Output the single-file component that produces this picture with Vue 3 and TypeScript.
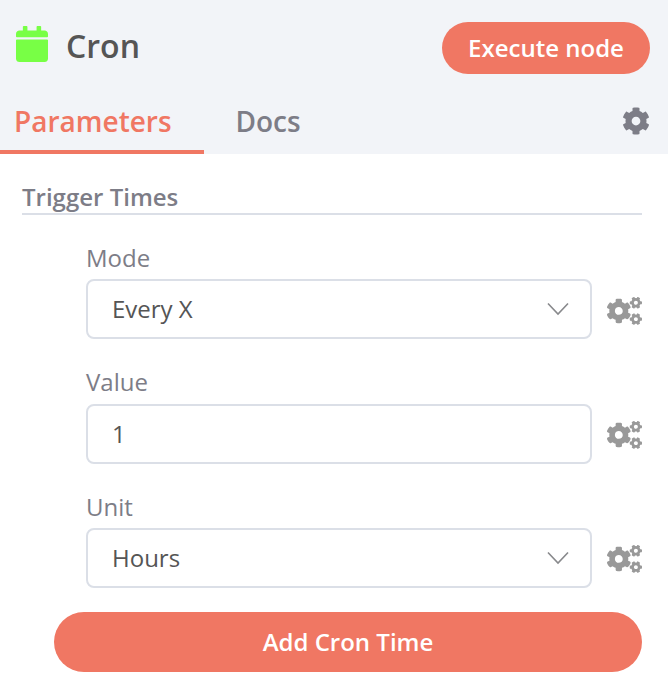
<script setup lang="ts">
import { ref } from 'vue'

interface Field {
  label: string
  value: string
  kind: 'select' | 'input'
}

const fields = ref<Field[]>([
  { label: 'Mode', value: 'Every X', kind: 'select' },
  { label: 'Value', value: '1', kind: 'input' },
  { label: 'Unit', value: 'Hours', kind: 'select' },
])
</script>

<template>
  <main class="panel">
    <header class="header">
      <div class="title-row">
        <svg class="calendar" viewBox="0 0 448 512" preserveAspectRatio="none" aria-hidden="true">
          <path d="M12 192h424c6.600 0 12 5.400 12 12v260c0 26.500-21.500 48-48 48H48c-26.500 0-48-21.500-48-48V204c0-6.600 5.400-12 12-12zm436-44v-36c0-26.500-21.500-48-48-48h-48V12c0-6.600-5.400-12-12-12h-40c-6.600 0-12 5.400-12 12v52H160V12c0-6.600-5.400-12-12-12h-40c-6.600 0-12 5.400-12 12v52H48C21.500 64 0 85.500 0 112v36c0 6.600 5.400 12 12 12h424c6.600 0 12-5.400 12-12z" />
        </svg>
        <h1 class="title">Cron</h1>
        <button class="button execute" type="button">Execute node</button>
      </div>
      <nav class="tabs">
        <a class="tab active">Parameters</a>
        <a class="tab docs">Docs</a>
        <svg class="settings" viewBox="0 0 512 512" aria-hidden="true">
          <path d="M487.400 315.700l-42.600-24.600c4.300-23.200 4.300-47 0-70.200l42.600-24.600c4.900-2.800 7.100-8.600 5.500-14-11.100-35.600-30-67.800-54.700-94.600-3.800-4.100-10-5.100-14.800-2.300L380.800 110c-17.900-15.400-38.500-27.300-60.800-35.100V25.800c0-5.600-3.900-10.500-9.400-11.700-36.700-8.200-74.300-7.800-109.200 0-5.500 1.200-9.400 6.100-9.400 11.700V75c-22.200 7.900-42.800 19.800-60.800 35.100L88.700 85.500c-4.900-2.800-11-1.900-14.800 2.300-24.700 26.700-43.600 58.900-54.700 94.600-1.700 5.400.6 11.200 5.500 14L67.300 221c-4.300 23.200-4.300 47 0 70.200l-42.600 24.600c-4.900 2.800-7.100 8.600-5.500 14 11.100 35.600 30 67.800 54.700 94.600 3.800 4.100 10 5.100 14.800 2.300l42.600-24.600c17.900 15.400 38.500 27.300 60.800 35.100v49.200c0 5.600 3.900 10.500 9.400 11.700 36.700 8.200 74.300 7.800 109.200 0 5.500-1.200 9.400-6.100 9.400-11.700v-49.200c22.200-7.900 42.800-19.800 60.800-35.100l42.600 24.600c4.900 2.800 11 1.900 14.800-2.300 24.700-26.700 43.600-58.900 54.700-94.600 1.500-5.500-.7-11.300-5.600-14.100zM256 336c-44.100 0-80-35.900-80-80s35.900-80 80-80 80 35.900 80 80-35.900 80-80 80z" />
        </svg>
      </nav>
    </header>

    <section class="content">
      <h2 class="section-title">Trigger Times</h2>
      <div class="fields">
        <div v-for="field in fields" :key="field.label" class="field">
          <span class="label">{{ field.label }}</span>
          <div class="row">
            <div class="control">
              <span class="value">{{ field.value }}</span>
              <svg v-if="field.kind === 'select'" class="chevron" viewBox="0 0 22 14" aria-hidden="true">
                <path d="M1 1.500L11 12L21 1.500" />
              </svg>
            </div>
            <svg class="cogs" viewBox="0 0 640 512" aria-hidden="true">
              <path d="M512.100 191l-8.200 14.300c-3 5.300-9.400 7.500-15.100 5.400-11.800-4.400-22.600-10.700-32.100-18.600-4.600-3.800-5.800-10.500-2.800-15.700l8.200-14.300c-6.900-8-12.300-17.300-15.900-27.400h-16.500c-6 0-11.200-4.300-12.200-10.300-2-12-2.100-24.600 0-37.100 1-6 6.200-10.400 12.200-10.400h16.500c3.600-10.100 9-19.400 15.900-27.400l-8.200-14.300c-3-5.200-1.900-11.900 2.800-15.700 9.500-7.900 20.400-14.200 32.100-18.600 5.700-2.100 12.100.1 15.100 5.400l8.200 14.300c10.500-1.900 21.200-1.900 31.700 0L552 6.300c3-5.300 9.400-7.500 15.100-5.400 11.800 4.400 22.600 10.700 32.100 18.600 4.600 3.800 5.800 10.500 2.800 15.700l-8.200 14.300c6.900 8 12.300 17.300 15.900 27.400h16.500c6 0 11.200 4.300 12.200 10.300 2 12 2.100 24.600 0 37.100-1 6-6.200 10.400-12.200 10.400h-16.500c-3.600 10.100-9 19.400-15.900 27.400l8.200 14.300c3 5.200 1.900 11.900-2.800 15.700-9.500 7.900-20.400 14.200-32.100 18.600-5.700 2.100-12.100-.1-15.100-5.400l-8.200-14.300c-10.400 1.900-21.200 1.900-31.700 0zm-10.500-58.800c38.500 29.600 82.400-14.300 52.800-52.800-38.500-29.700-82.400 14.300-52.800 52.800zM386.300 286.100l33.700 16.800c10.100 5.800 14.500 18.100 10.500 29.100-8.900 24.200-26.400 46.400-42.600 65.800-7.400 8.900-20.200 11.100-30.300 5.300l-29.100-16.800c-16 13.700-34.600 24.600-54.900 31.700v33.600c0 11.600-8.300 21.600-19.700 23.600-24.600 4.200-50.400 4.400-75.900 0-11.500-2-20-11.900-20-23.600V418c-20.300-7.200-38.900-18-54.900-31.700L74 403c-10 5.800-22.900 3.600-30.300-5.300-16.200-19.400-33.300-41.600-42.200-65.700-4-10.900.4-23.200 10.500-29.100l33.300-16.800c-3.900-20.900-3.900-42.400 0-63.400L12 205.800c-10.100-5.800-14.600-18.100-10.500-29 8.900-24.200 26-46.400 42.200-65.800 7.400-8.900 20.200-11.100 30.300-5.300l29.100 16.800c16-13.700 34.600-24.600 54.900-31.700V57.100c0-11.500 8.200-21.500 19.600-23.500 24.600-4.200 50.500-4.400 76-.1 11.500 2 20 11.900 20 23.600v33.600c20.300 7.200 38.900 18 54.900 31.700l29.100-16.800c10-5.800 22.900-3.600 30.300 5.300 16.200 19.400 33.200 41.600 42.100 65.800 4 10.900.1 23.200-10 29.100l-33.700 16.800c3.900 21 3.900 42.500 0 63.500zm-117.600 21.100c59.200-77-28.700-164.900-105.700-105.700-59.200 77 28.700 164.900 105.700 105.700zm243.400 182.700l-8.200 14.300c-3 5.300-9.400 7.500-15.100 5.400-11.800-4.400-22.600-10.700-32.100-18.600-4.600-3.800-5.800-10.500-2.800-15.700l8.200-14.300c-6.900-8-12.300-17.300-15.900-27.400h-16.500c-6 0-11.200-4.300-12.200-10.300-2-12-2.100-24.600 0-37.100 1-6 6.200-10.400 12.200-10.400h16.500c3.600-10.100 9-19.400 15.900-27.400l-8.200-14.300c-3-5.200-1.900-11.900 2.800-15.700 9.500-7.900 20.400-14.200 32.100-18.600 5.700-2.100 12.100.1 15.100 5.400l8.200 14.300c10.500-1.900 21.200-1.900 31.700 0l8.200-14.300c3-5.300 9.400-7.500 15.100-5.400 11.800 4.400 22.600 10.700 32.100 18.600 4.600 3.800 5.800 10.500 2.800 15.700l-8.200 14.300c6.900 8 12.300 17.300 15.900 27.400h16.500c6 0 11.200 4.300 12.200 10.300 2 12 2.100 24.600 0 37.100-1 6-6.200 10.400-12.200 10.400h-16.500c-3.600 10.100-9 19.400-15.900 27.400l8.200 14.300c3 5.200 1.900 11.900-2.800 15.700-9.500 7.900-20.400 14.200-32.100 18.600-5.700 2.100-12.100-.1-15.100-5.400l-8.200-14.300c-10.400 1.900-21.200 1.900-31.700 0zM501.600 431c38.500 29.600 82.400-14.300 52.800-52.800-38.500-29.600-82.400 14.300-52.800 52.800z" />
            </svg>
          </div>
        </div>
      </div>
      <button class="button add" type="button">Add Cron Time</button>
    </section>
  </main>
</template>

<style>
body {
  margin: 0;
  background: #fff;
}
</style>

<style scoped>
* {
  box-sizing: border-box;
}

.panel {
  width: 668px;
  height: 698px;
  overflow: hidden;
  background: #fff;
  color: #555;
  font-family: "Open Sans", sans-serif;
}

.header {
  height: 154px;
  background: #f2f4f8;
}

.title-row {
  display: flex;
  align-items: center;
  height: 96px;
  padding: 0 18px 0 16px;
}

.calendar {
  width: 32px;
  height: 36px;
  margin-bottom: 8px;
  fill: #78ff45;
}

.title {
  margin: 0 auto 4px 18px;
  font-size: 32px;
  line-height: 44px;
  font-weight: 600;
}

.button {
  border: 0;
  border-radius: 30px;
  padding: 0 0 2px;
  background: #f07763;
  color: #fff;
  font-family: inherit;
  font-size: 24px;
  font-weight: 600;
}

.execute {
  width: 208px;
  height: 52px;
}

.tabs {
  display: flex;
  height: 58px;
  padding-right: 18px;
  color: #7d7d87;
  font-size: 28px;
  line-height: 50px;
  font-weight: 600;
}

.tab {
  height: 58px;
}

.active {
  width: 204px;
  padding-left: 14px;
  border-bottom: 4px solid #f07763;
  color: #f07763;
}

.docs {
  margin-left: 31.500px;
}

.settings {
  width: 28px;
  height: 28px;
  margin: 11px 0 0 auto;
  fill: #7d7d87;
}

.content {
  padding: 26px 26px 0 22px;
}

.section-title {
  height: 35px;
  margin: 0;
  border-bottom: 2px solid #dbdfe7;
  color: #7d7d87;
  font-size: 24px;
  line-height: 33px;
  font-weight: 600;
}

.fields {
  display: grid;
  grid-template-rows: 125px 124px 124px;
  padding: 24px 0 0 64px;
}

.field {
  display: flex;
  flex-direction: column;
}

.label {
  height: 40px;
  color: #7d7d87;
  font-size: 24px;
  line-height: 38px;
}

.field:nth-child(2) .label {
  line-height: 36px;
}

.row {
  display: flex;
  align-items: center;
  justify-content: space-between;
}

.control {
  display: flex;
  align-items: center;
  justify-content: space-between;
  width: 506px;
  height: 60px;
  padding: 0 21px 0 24px;
  border: 2px solid #dbdfe7;
  border-radius: 8px;
  font-size: 24px;
}

.value {
  padding-bottom: 2px;
}

.chevron {
  width: 22px;
  height: 14px;
  fill: none;
  stroke: #88898c;
  stroke-width: 1.600;
}

.cogs {
  width: 35px;
  height: 28px;
  margin-top: 4px;
  fill: #999;
}

.field:nth-child(n + 2) .cogs {
  margin-top: 2px;
}

.add {
  display: block;
  width: 588px;
  height: 60px;
  margin-left: 32px;
}
</style>
